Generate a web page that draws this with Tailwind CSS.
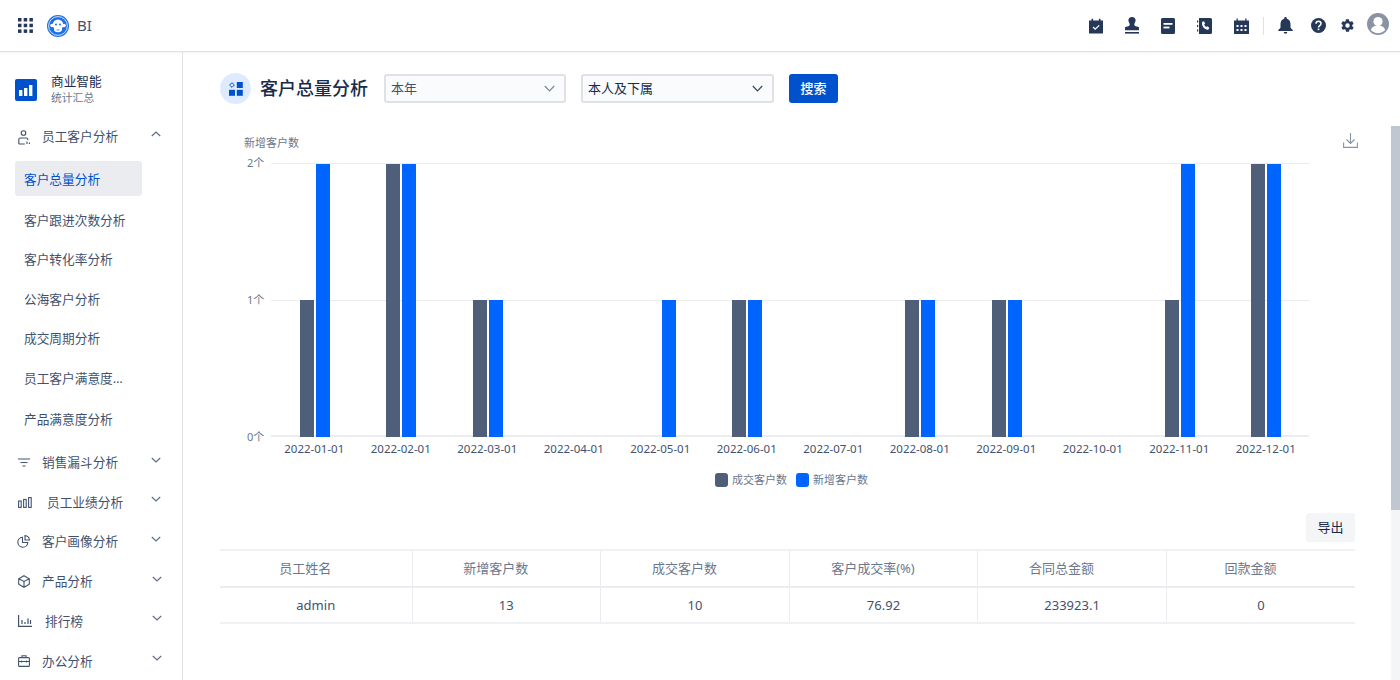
<!doctype html>
<html>
<head>
<meta charset="utf-8" />
<script src="https://cdn.jsdelivr.net/npm/@tailwindcss/browser@4"></script>
</head>
<body>
<div class="flex h-[680px] w-[1400px] flex-col overflow-hidden bg-white text-[13px] text-[#42526e] [font-family:'Noto_Sans','Noto_Sans_CJK_SC',sans-serif]">

	<!-- top bar -->
	<header class="flex h-[52px] shrink-0 items-center border-b border-[#dfe1e6] shadow-[0_1px_2px_rgba(9,30,66,0.06)]">
		<svg class="ml-[18px]" width="15" height="15" viewBox="0 0 15 15" fill="#253858">
			<rect x="0" y="0" width="3.5" height="3.5" /><rect x="5.7" y="0" width="3.5" height="3.5" /><rect x="11.4" y="0" width="3.5" height="3.5" />
			<rect x="0" y="5.7" width="3.5" height="3.5" /><rect x="5.7" y="5.7" width="3.5" height="3.5" /><rect x="11.4" y="5.7" width="3.5" height="3.5" />
			<rect x="0" y="11.4" width="3.5" height="3.5" /><rect x="5.7" y="11.4" width="3.5" height="3.5" /><rect x="11.4" y="11.4" width="3.5" height="3.5" />
		</svg>
		<svg class="ml-[14px]" width="22" height="22" viewBox="0 0 22 22">
			<circle cx="11" cy="11" r="11" fill="#1f6fe5" />
			<circle cx="11" cy="11" r="9.400" fill="none" stroke="#fff" stroke-width=".8" />
			<g fill="#fff"><circle cx="11" cy="9.800" r="5.300" /><circle cx="5" cy="10.500" r="1.800" /><circle cx="17" cy="10.500" r="1.800" /><ellipse cx="11" cy="14.300" rx="4" ry="3" /></g>
			<circle cx="9" cy="9.500" r="1" fill="#1f6fe5" /><circle cx="13" cy="9.500" r="1" fill="#1f6fe5" />
			<path d="M9.500 15h3" stroke="#1f6fe5" stroke-width=".8" />
		</svg>
		<span class="ml-[8px] text-[15px] text-[#42526e]">BI</span>

		<div class="ml-auto mr-[11px] flex items-center">
			<svg class="mr-[20px]" width="16" height="16" viewBox="0 0 16 16" fill="#253858"><path d="M1 2.500h2.500V.8h1.600v1.700h5.800V.8h1.600v1.700H15V15.500H1z" /><path d="M5 9l2.200 2.200L11.200 7.400" fill="none" stroke="#fff" stroke-width="1.300" /></svg>
			<svg class="mr-[21px]" width="16" height="17" viewBox="0 0 16 17" fill="#253858"><path d="M8 0a3.600 3.600 0 0 0-3.600 3.600c0 1.600 1.300 2.500 1.300 4 0 .7-.3 1.200-.9 1.500L1 10.300v2.900h14v-2.900l-3.800-1.200c-.6-.3-.9-.8-.9-1.500 0-1.500 1.300-2.400 1.300-4A3.600 3.600 0 0 0 8 0z" /><rect x="1" y="15" width="14" height="1.600" /></svg>
			<svg class="mr-[22px]" width="14" height="16" viewBox="0 0 14 16" fill="#253858"><path d="M1.500 0h11A1.500 1.500 0 0 1 14 1.500v13a1.500 1.500 0 0 1-1.500 1.500h-11A1.500 1.500 0 0 1 0 14.500v-13A1.500 1.500 0 0 1 1.500 0z" /><rect x="2.500" y="5" width="9" height="1.800" fill="#fff" /><rect x="2.500" y="8.600" width="6" height="1.800" fill="#fff" /></svg>
			<svg class="mr-[22px]" width="15" height="16" viewBox="0 0 15 16" fill="#253858"><path d="M2 0h11.500A1.500 1.500 0 0 1 15 1.500v13a1.500 1.500 0 0 1-1.500 1.500H2zM0 2.500h1.200v2H0zM0 7h1.200v2H0zM0 11.500h1.200v2H0z" /><path d="M5.500 3.800l1.600-.5 1 2.400-1 .8c.4 1 1.200 1.900 2.200 2.500l1-.8 2 1.500-.7 1.600c-.4.500-1 .6-1.600.4C6.800 10.700 5 8 4.900 5.200c0-.6.200-1.100.6-1.400z" fill="#fff" /></svg>
			<svg class="mr-[14px]" width="15" height="16" viewBox="0 0 15 16" fill="#253858"><path d="M0 2.500h2.500V.5h1.300v2h7.400v-2h1.300v2H15V16H0z" /><g fill="#fff"><rect x="2.500" y="7" width="2" height="2" /><rect x="6.500" y="7" width="2" height="2" /><rect x="10.500" y="7" width="2" height="2" /><rect x="2.500" y="11" width="2" height="2" /><rect x="6.500" y="11" width="2" height="2" /><rect x="10.500" y="11" width="2" height="2" /></g></svg>
			<div class="mr-[14px] h-[18px] w-[1.500px] bg-[#dfe1e6]"></div>
			<svg class="mr-[18px]" width="15" height="17" viewBox="0 0 15 17" fill="#253858"><path d="M7.500 0a1.300 1.300 0 0 0-1.300 1.300v.5C3.800 2.400 2.500 4.400 2.500 7v3.800L.3 13v1h14.400v-1l-2.200-2.200V7c0-2.600-1.300-4.600-3.700-5.200v-.5A1.300 1.300 0 0 0 7.500 0z" /><path d="M5.700 15h3.600a1.800 1.800 0 0 1-3.600 0z" /></svg>
			<svg class="mr-[14px]" width="15" height="15" viewBox="0 0 15 15"><circle cx="7.500" cy="7.500" r="7.500" fill="#253858" /><path d="M5 5.800a2.500 2.500 0 0 1 5 0c0 1.800-2.500 1.900-2.500 3.700" fill="none" stroke="#fff" stroke-width="1.500" /><rect x="6.700" y="10.500" width="1.600" height="1.700" fill="#fff" /></svg>
			<svg class="mr-[12px]" width="15" height="15" viewBox="0 0 24 24" fill="#253858"><path d="M19.400 13c.1-.3.100-.7.100-1s0-.7-.1-1l2.100-1.600c.2-.2.200-.4.100-.6l-2-3.500c-.1-.2-.4-.3-.6-.2l-2.500 1a7.300 7.300 0 0 0-1.700-1l-.4-2.700c0-.2-.2-.4-.5-.4h-4c-.2 0-.5.200-.5.400l-.4 2.700c-.6.300-1.200.6-1.700 1l-2.500-1c-.2-.1-.5 0-.6.200l-2 3.500c-.1.200-.1.400.1.600L4.500 11c-.1.300-.1.700-.1 1s0 .7.100 1l-2.100 1.600c-.2.200-.2.400-.1.600l2 3.500c.1.200.4.300.6.200l2.500-1c.5.400 1.100.7 1.700 1l.4 2.700c0 .2.300.4.500.4h4c.3 0 .5-.2.500-.4l.4-2.700c.6-.3 1.200-.6 1.700-1l2.500 1c.2.100.5 0 .6-.2l2-3.500c.1-.2.100-.4-.1-.6zM12 15.500a3.500 3.500 0 1 1 0-7 3.500 3.500 0 0 1 0 7z" /></svg>
			<svg class="-mt-[4px]" width="22" height="22" viewBox="0 0 22 22"><circle cx="11" cy="11" r="11" fill="#8993a4" /><circle cx="11" cy="8.600" r="4.600" fill="#fff" /><path d="M3.800 17c1.200-3.300 4-4.400 7.200-4.400s6 1.100 7.200 4.400c-1.800 2-4.400 3.200-7.200 3.200s-5.400-1.200-7.200-3.200z" fill="#fff" /></svg>
		</div>
	</header>

	<div class="flex min-h-0 flex-1">
		<!-- side menu -->
		<aside class="w-[183px] shrink-0 overflow-hidden border-r border-[#dfe1e6] pt-[21px] text-[12.700px]">
			<div class="flex h-[34px] items-center pl-[15px]">
				<div class="flex h-[22px] w-[22px] items-center justify-center rounded-[2px] bg-[#0052cc]">
					<svg width="14" height="11" viewBox="0 0 14 11" fill="#fff"><rect x="0" y="5" width="3.400" height="6" /><rect x="5" y="3" width="3.400" height="8" /><rect x="10" y="0" width="3.400" height="11" /></svg>
				</div>
				<div class="-mt-[3px] ml-[14px]">
					<p class="text-[12.700px] leading-[18px] text-[#172b4d]">商业智能</p>
					<p class="text-[10.800px] leading-[16px] text-[#6b778c]">统计汇总</p>
				</div>
			</div>

			<div class="mt-[10px] flex h-[40px] items-center">
				<svg class="ml-[18px] mr-[12px]" width="12" height="15" viewBox="0 0 12 15" fill="none" stroke="#42526e" stroke-width="1.100"><circle cx="5.500" cy="3" r="2.300" /><path d="M.8 14V9.500a1.500 1.500 0 0 1 1.500-1.500h6a1.500 1.500 0 0 1 1.500 1.500V10" /><path d="M.8 14h6M9 11.500V14M11.400 12.500V14" /></svg>
				<span>员工客户分析</span>
				<svg class="ml-[33px] -mt-[6px]" width="10" height="6" viewBox="0 0 10 6" fill="none" stroke="#5e6c84" stroke-width="1.200"><path d="M.8 5L5 1l4.200 4" /></svg>
			</div>

			<div class="ml-[15px] mt-[4px] flex w-[127px] flex-col">
				<div class="flex h-[35px] items-center rounded-[3px] bg-[#ebecf0] pl-[9px] pt-[3px] text-[#0052cc]">客户总量分析</div>
				<div class="mt-[7px] flex h-[36px] items-center pl-[9px]">客户跟进次数分析</div>
				<div class="mt-[3px] flex h-[35.800px] items-center pl-[9px]">客户转化率分析</div>
				<div class="mt-[4px] flex h-[35.800px] items-center pl-[9px]">公海客户分析</div>
				<div class="mt-[3px] flex h-[35.800px] items-center pl-[9px]">成交周期分析</div>
				<div class="mt-[4px] flex h-[35.800px] items-center pl-[9px]">
					<span class="max-w-[110px] truncate">员工客户满意度分析</span>
				</div>
				<div class="mt-[5px] flex h-[35.800px] items-center pl-[9px]">产品满意度分析</div>
			</div>

			<div class="mt-[6px] flex h-[40px] items-center">
				<svg class="ml-[18px] mr-[12px]" width="12" height="9" viewBox="0 0 12 9" stroke="#42526e" stroke-width="1.200"><path d="M0 1h12M2.500 4.500h7M4.500 8h3" /></svg>
				<span>销售漏斗分析</span>
				<svg class="ml-[33px] -mt-[6px]" width="10" height="6" viewBox="0 0 10 6" fill="none" stroke="#5e6c84" stroke-width="1.200"><path d="M.8 1L5 5l4.200-4" /></svg>
			</div>
			<div class="flex h-[39px] items-center">
				<svg class="ml-[18px] mr-[15px]" width="14" height="11" viewBox="0 0 14 11" fill="none" stroke="#42526e" stroke-width="1.100"><rect x=".6" y="4" width="2.600" height="6.400" /><rect x="5.600" y="2.500" width="2.600" height="7.900" /><rect x="10.600" y=".6" width="2.600" height="9.800" /></svg>
				<span>员工业绩分析</span>
				<svg class="ml-[28px] -mt-[6px]" width="10" height="6" viewBox="0 0 10 6" fill="none" stroke="#5e6c84" stroke-width="1.200"><path d="M.8 1L5 5l4.200-4" /></svg>
			</div>
			<div class="flex h-[39.800px] items-center">
				<svg class="ml-[17px] mr-[12px]" width="13" height="13" viewBox="0 0 13 13" fill="none" stroke="#42526e" stroke-width="1.100"><path d="M5.500 2.200a5 5 0 1 0 5.300 5.300H5.500z" /><path d="M8 .6a4.500 4.500 0 0 1 4.400 4.400H8z" /></svg>
				<span>客户画像分析</span>
				<svg class="ml-[33px] -mt-[6px]" width="10" height="6" viewBox="0 0 10 6" fill="none" stroke="#5e6c84" stroke-width="1.200"><path d="M.8 1L5 5l4.200-4" /></svg>
			</div>
			<div class="flex h-[39.800px] items-center">
				<svg class="ml-[18px] mr-[12px]" width="12" height="13" viewBox="0 0 12 13" fill="none" stroke="#42526e" stroke-width="1.100"><path d="M6 .7l5.300 3v5.600L6 12.300.7 9.300V3.700zM.7 3.700L6 6.500l5.300-2.800M6 6.500v5.800" /></svg>
				<span>产品分析</span>
				<svg class="ml-[59px] -mt-[6px]" width="10" height="6" viewBox="0 0 10 6" fill="none" stroke="#5e6c84" stroke-width="1.200"><path d="M.8 1L5 5l4.200-4" /></svg>
			</div>
			<div class="flex h-[39.800px] items-center">
				<svg class="ml-[18px] mr-[13px]" width="14" height="12" viewBox="0 0 14 12" fill="none" stroke="#42526e" stroke-width="1.200"><path d="M.6 0v11.400H14M4 5v4M7 7v2M10 3.500v5.500M12.500 5v4" /></svg>
				<span>排行榜</span>
				<svg class="ml-[69px] -mt-[6px]" width="10" height="6" viewBox="0 0 10 6" fill="none" stroke="#5e6c84" stroke-width="1.200"><path d="M.8 1L5 5l4.200-4" /></svg>
			</div>
			<div class="flex h-[39.800px] items-center">
				<svg class="ml-[18px] mr-[12px]" width="12" height="12" viewBox="0 0 12 12" fill="none" stroke="#42526e" stroke-width="1.100"><rect x=".6" y="2.600" width="10.800" height="8.800" rx="1" /><path d="M4 2.600V.8h4v1.800M.6 6.500h10.800M3.500 5.500v2M8.500 5.500v2" /></svg>
				<span>办公分析</span>
				<svg class="ml-[59px] -mt-[6px]" width="10" height="6" viewBox="0 0 10 6" fill="none" stroke="#5e6c84" stroke-width="1.200"><path d="M.8 1L5 5l4.200-4" /></svg>
			</div>
		</aside>

		<main class="flex min-w-0 flex-1 flex-col">
			<!-- title and filters -->
			<div class="flex h-[74px] shrink-0 items-start pl-[37px] pt-[21px]">
				<div class="flex h-[31px] w-[31px] items-center justify-center rounded-full bg-[#deebff]">
					<svg width="14" height="14" viewBox="0 0 14 14" fill="#0052cc"><rect x="0" y="7.800" width="6" height="6" /><rect x="7.800" y="7.800" width="6" height="6" /><rect x="7.800" y="0" width="6" height="6" /><path d="M3 .8L5.400 3 3 5.400.6 3z" fill="none" stroke="#0052cc" /></svg>
				</div>
				<h1 class="ml-[9px] text-[18px] font-medium leading-[31px] text-[#172b4d]">客户总量分析</h1>
				<div class="ml-[16px] mt-px flex h-[29px] w-[182px] items-center justify-between rounded-[3px] border-2 border-[#dfe1e6] bg-[#fafbfc] pl-[5px] pr-[9px] text-[#42526e]">
					本年
					<svg width="11" height="7" viewBox="0 0 11 7" fill="none" stroke="#7a869a" stroke-width="1.200"><path d="M.8 1l4.700 4.800L10.200 1" /></svg>
				</div>
				<div class="ml-[15px] mt-px flex h-[29px] w-[193px] items-center justify-between rounded-[3px] border-2 border-[#dfe1e6] bg-[#fafbfc] pl-[5px] pr-[9px] text-[#172b4d]">
					本人及下属
					<svg width="11" height="7" viewBox="0 0 11 7" fill="none" stroke="#344563" stroke-width="1.200"><path d="M.8 1l4.700 4.800L10.200 1" /></svg>
				</div>
				<button class="ml-[15px] mt-px h-[29px] w-[49px] rounded-[3px] bg-[#0052cc] font-medium text-white">搜索</button>
			</div>

			<div class="flex min-h-0 flex-1">
				<div class="min-w-0 flex-1 pl-[37px] pr-[36px]">
					<!-- chart -->
					<div class="flex h-[37px] items-start justify-between pl-[24px]">
						<span class="mt-[9px] text-[11px] leading-[16px] text-[#6b778c]">新增客户数</span>
						<svg class="mt-[7px] mr-[-3px]" width="15" height="15" viewBox="0 0 15 15" fill="none" stroke="#8993a4" stroke-width="1.100"><path d="M7.500 0v10M3.500 6.500l4 4 4-4M.6 9.500v4.900h13.800V9.500" /></svg>
					</div>
					<div class="flex h-[274px]">
						<div class="-mt-[8px] flex h-[290px] w-[51px] flex-col items-start justify-between pl-[27px] text-[11px] leading-[16px] text-[#6b778c]">
							<span>2个</span><span>1个</span><span>0个</span>
						</div>
						<div class="relative h-[274px] w-[1038px]">
							<div class="absolute inset-x-0 top-0 border-t border-[#ebecf0]"></div>
							<div class="absolute inset-x-0 top-[137px] border-t border-[#ebecf0]"></div>
							<div class="absolute inset-x-0 bottom-0 border-t-2 border-[#ebecf0]"></div>
							<div class="absolute inset-0 grid grid-cols-12">
								<div class="flex items-end justify-center gap-[2px] pl-[1px]"><div class="h-[137px] w-[14px] bg-[#505f79]"></div><div class="h-[273px] w-[14px] bg-[#0065ff]"></div></div>
								<div class="flex items-end justify-center gap-[2px] pl-[1px]"><div class="h-[273px] w-[14px] bg-[#505f79]"></div><div class="h-[273px] w-[14px] bg-[#0065ff]"></div></div>
								<div class="flex items-end justify-center gap-[2px] pl-[1px]"><div class="h-[137px] w-[14px] bg-[#505f79]"></div><div class="h-[137px] w-[14px] bg-[#0065ff]"></div></div>
								<div></div>
								<div class="flex items-end justify-center gap-[2px] pl-[1px]"><div class="h-0 w-[14px]"></div><div class="h-[137px] w-[14px] bg-[#0065ff]"></div></div>
								<div class="flex items-end justify-center gap-[2px] pl-[1px]"><div class="h-[137px] w-[14px] bg-[#505f79]"></div><div class="h-[137px] w-[14px] bg-[#0065ff]"></div></div>
								<div></div>
								<div class="flex items-end justify-center gap-[2px] pl-[1px]"><div class="h-[137px] w-[14px] bg-[#505f79]"></div><div class="h-[137px] w-[14px] bg-[#0065ff]"></div></div>
								<div class="flex items-end justify-center gap-[2px] pl-[1px]"><div class="h-[137px] w-[14px] bg-[#505f79]"></div><div class="h-[137px] w-[14px] bg-[#0065ff]"></div></div>
								<div></div>
								<div class="flex items-end justify-center gap-[2px] pl-[1px]"><div class="h-[137px] w-[14px] bg-[#505f79]"></div><div class="h-[273px] w-[14px] bg-[#0065ff]"></div></div>
								<div class="flex items-end justify-center gap-[2px] pl-[1px]"><div class="h-[273px] w-[14px] bg-[#505f79]"></div><div class="h-[273px] w-[14px] bg-[#0065ff]"></div></div>
							</div>
						</div>
					</div>
					<div class="ml-[51px] mt-[4px] grid w-[1038px] grid-cols-12 text-center text-[11.500px] leading-[16px] text-[#42526e]">
						<span>2022-01-01</span><span>2022-02-01</span><span>2022-03-01</span><span>2022-04-01</span><span>2022-05-01</span><span>2022-06-01</span><span>2022-07-01</span><span>2022-08-01</span><span>2022-09-01</span><span>2022-10-01</span><span>2022-11-01</span><span>2022-12-01</span>
					</div>
					<div class="ml-[495px] mt-[16px] flex h-[14px] items-center text-[11px] text-[#6b778c]">
						<i class="h-[14px] w-[13px] rounded-[3px] bg-[#505f79]"></i>
						<span class="ml-[4px]">成交客户数</span>
						<i class="ml-[9px] h-[14px] w-[13px] rounded-[3px] bg-[#0065ff]"></i>
						<span class="ml-[4px]">新增客户数</span>
					</div>

					<!-- table -->
					<div class="mt-[26px] flex justify-end">
						<button class="h-[29px] w-[49px] rounded-[3px] bg-[#f4f5f7] text-[#172b4d]">导出</button>
					</div>
					<table class="mt-[7px] w-full table-fixed border-t-2 border-b-2 border-[#f0f1f4] text-center">
						<thead>
							<tr class="h-[37px] border-b-2 border-[#ebecf0] text-[#6b778c]">
								<th class="w-[192px] border-r border-[#ebecf0] pr-[21px] font-normal">员工姓名</th>
								<th class="border-r border-[#ebecf0] pr-[21px] font-normal">新增客户数</th>
								<th class="border-r border-[#ebecf0] pr-[21px] font-normal">成交客户数</th>
								<th class="border-r border-[#ebecf0] pr-[21px] font-normal">客户成交率(%)</th>
								<th class="border-r border-[#ebecf0] pr-[21px] font-normal">合同总金额</th>
								<th class="pr-[21px] font-normal">回款金额</th>
							</tr>
						</thead>
						<tbody>
							<tr class="h-[36px]">
								<td class="border-r border-[#ebecf0] pt-px">admin</td>
								<td class="border-r border-[#ebecf0] pt-px">13</td>
								<td class="border-r border-[#ebecf0] pt-px">10</td>
								<td class="border-r border-[#ebecf0] pt-px">76.92</td>
								<td class="border-r border-[#ebecf0] pt-px">233923.1</td>
								<td class="pt-px">0</td>
							</tr>
						</tbody>
					</table>
				</div>
				<!-- scrollbar -->
				<div class="w-[9px] shrink-0 bg-[#f4f5f7]">
					<div class="h-[384px] bg-[#c1c7d0]"></div>
				</div>
			</div>
		</main>
	</div>
</div>
</body>
</html>
